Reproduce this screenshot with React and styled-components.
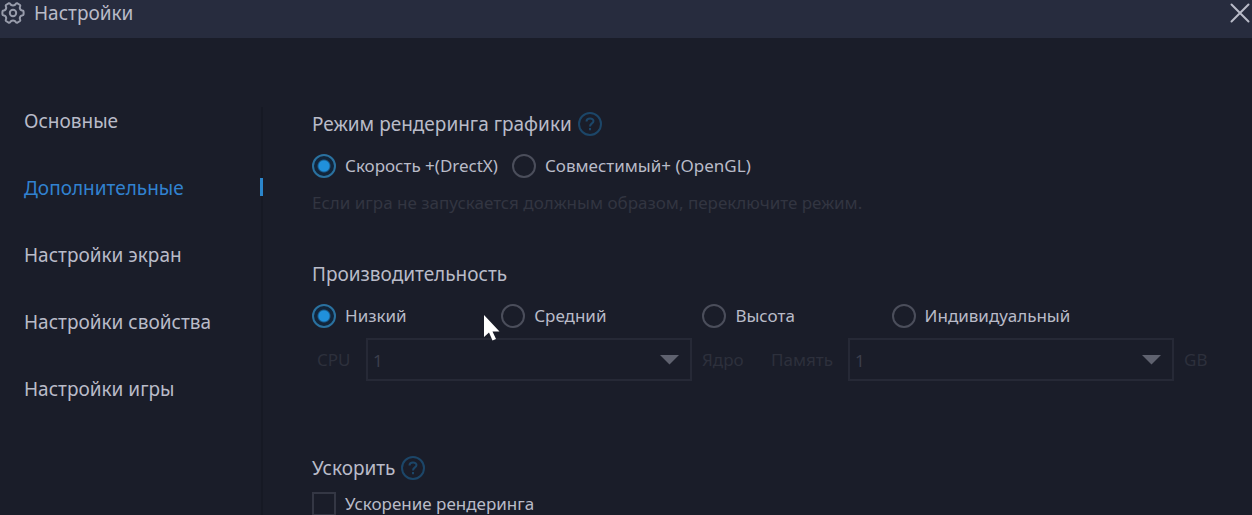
import React, { useState } from 'react';
import styled, { createGlobalStyle } from 'styled-components';

const GlobalStyle = createGlobalStyle`
  * {
    box-sizing: border-box;
  }

  body {
    margin: 0;
    background-color: #1a1d29;
    color: #b9bbc8;
    font-family: 'Noto Sans', 'Open Sans', sans-serif;
    font-size: 17px;
    overflow: hidden;
  }
`;

const Window = styled.div`
  display: flex;
  flex-direction: column;
  min-height: 100vh;
`;

const Header = styled.header`
  display: flex;
  align-items: center;
  gap: 9px;
  height: 38px;
  padding: 0 2px 12px 1px;
  background-color: #272c3e;
`;

const Title = styled.h1`
  flex: 1;
  margin: 0;
  font-size: 19px;
  line-height: 26px;
  font-weight: 400;
`;

const CloseButton = styled.button`
  display: flex;
  padding: 0;
  border: none;
  background: none;
  color: #b9bbc8;
  cursor: pointer;
`;

const Body = styled.div`
  display: flex;
  flex: 1;
  padding-top: 69px;
`;

const Sidebar = styled.nav`
  display: flex;
  flex-direction: column;
  gap: 39px;
  width: 263px;
  border-right: 2px solid #161924;
`;

const NavLink = styled.a`
  position: relative;
  padding-left: 24px;
  font-size: 19px;
  line-height: 28px;
  text-decoration: none;
  color: ${({ $active }) => ($active ? '#3182d0' : '#b9bbc8')};

  &::after {
    content: '';
    display: ${({ $active }) => ($active ? 'block' : 'none')};
    position: absolute;
    top: 4px;
    right: -2px;
    width: 3px;
    height: 18px;
    background-color: #2b86cc;
  }
`;

const Content = styled.main`
  flex: 1;
  padding: 3px 0 0 49px;
`;

const Section = styled.section`
  margin-bottom: ${({ $space }) => $space || 44}px;
`;

const Heading = styled.h2`
  display: flex;
  align-items: center;
  gap: 6px;
  margin: 0 0 ${({ $space }) => $space || 14}px;
  font-size: 19px;
  line-height: 28px;
  font-weight: 400;
`;

const HelpButton = styled.button`
  display: flex;
  padding: 0;
  border: none;
  background: none;
  color: #1c4668;
  cursor: pointer;
`;

const ModeRow = styled.div`
  display: flex;
  gap: 14px;
`;

const LevelRow = styled.div`
  display: grid;
  grid-template-columns: 189fr 201fr 189fr 360fr;
`;

const Option = styled.label`
  display: flex;
  align-items: center;
  gap: 9px;
  line-height: 28px;
  white-space: nowrap;
`;

const Radio = styled.input`
  appearance: none;
  width: 24px;
  height: 24px;
  margin: 0;
  border: 2px solid #4b4e5b;
  border-radius: 50%;

  &:checked {
    border-color: #2a719f;
    background: radial-gradient(circle, #2090dc 5px, #12253a 7px);
  }
`;

const Checkbox = styled.input`
  appearance: none;
  width: 24px;
  height: 24px;
  margin: 0;
  border: 2px solid #343744;

  &:checked {
    background-color: #2090dc;
  }
`;

const Hint = styled.p`
  margin: 10px 0 0;
  line-height: 26px;
  color: #323541;
`;

const Resources = styled.div`
  display: flex;
  align-items: center;
  margin-top: 8px;
  padding: 0 46px 0 5px;
  color: #2d303c;
`;

const FieldLabel = styled.label`
  width: ${({ $width }) => $width}px;
`;

const Unit = styled.span`
  width: ${({ $width }) => $width}px;
  padding-left: 10px;
`;

const SelectBox = styled.div`
  position: relative;
  flex: 1;

  svg {
    position: absolute;
    top: 17px;
    right: 13px;
    pointer-events: none;
  }
`;

const Select = styled.select`
  appearance: none;
  display: block;
  width: 100%;
  height: 43px;
  padding: 2px 5px 0;
  border: 2px solid #262936;
  border-radius: 0;
  background-color: #1a1d29;
  color: #3c3f4c;
  font: inherit;
  opacity: 1;
`;

const Pointer = styled.svg`
  position: absolute;
  left: 483px;
  top: 315px;
  pointer-events: none;
`;

const GearIcon = () => (
  <svg width="24" height="24" viewBox="0 0 24 24" fill="none" stroke="#989cab" strokeWidth="2" strokeLinejoin="round">
    <path d="M8 2.200 Q9 2 9.700 3.600 Q12 5.400 14.300 3.600 Q15 2 16 2.200 L19 4 Q19.800 4.800 18.800 6.300 Q18.600 9 21.200 9.600 Q22.600 9.700 22.600 10.700 V13.300 Q22.600 14.300 21.200 14.400 Q18.600 15 18.800 17.700 Q19.800 19.200 19 20 L16 21.800 Q15 22 14.300 20.400 Q12 18.600 9.700 20.400 Q9 22 8 21.800 L5 20 Q4.200 19.200 5.200 17.700 Q5.400 15 2.800 14.400 Q1.400 14.300 1.400 13.300 V10.700 Q1.400 9.700 2.800 9.600 Q5.400 9 5.200 6.300 Q4.200 4.800 5 4 Z" />
    <circle cx="12" cy="12" r="3.200" />
  </svg>
);

const CloseIcon = () => (
  <svg width="20" height="20" viewBox="0 0 20 20" stroke="currentColor" strokeWidth="2" strokeLinecap="round">
    <path d="M1.500 1.500 18.500 18.500M18.500 1.500 1.500 18.500" />
  </svg>
);

const ArrowIcon = () => (
  <svg width="19" height="10" viewBox="0 0 19 10" fill="#5f626f">
    <path d="M0 0h19L9.500 9.500z" />
  </svg>
);

const Help = () => (
  <HelpButton aria-label="Справка">
    <svg width="24" height="24" viewBox="0 0 24 24" fill="none" stroke="currentColor" strokeWidth="2">
      <circle cx="12" cy="12" r="11" />
      <path d="M8.500 9.500c0-4 7-4 7-.5 0 2.500-3.500 2.300-3.500 5.500M12 16v2.300" />
    </svg>
  </HelpButton>
);

const menu = ['Основные', 'Дополнительные', 'Настройки экран', 'Настройки свойства', 'Настройки игры'];
const modes = ['Скорость +(DrectX)', 'Совместимый+ (OpenGL)'];
const levels = ['Низкий', 'Средний', 'Высота', 'Индивидуальный'];

const App = () => {
  const [page, setPage] = useState(menu[1]);
  const [mode, setMode] = useState(modes[0]);
  const [level, setLevel] = useState(levels[0]);
  const locked = level !== levels[3];

  return (
    <Window>
      <GlobalStyle />
      <Header>
        <GearIcon />
        <Title>Настройки</Title>
        <CloseButton aria-label="Закрыть">
          <CloseIcon />
        </CloseButton>
      </Header>
      <Body>
        <Sidebar>
          {menu.map((item) => (
            <NavLink key={item} href="#" $active={item === page} onClick={() => setPage(item)}>
              {item}
            </NavLink>
          ))}
        </Sidebar>
        <Content>
          <Section>
            <Heading>
              Режим рендеринга графики <Help />
            </Heading>
            <ModeRow>
              {modes.map((item) => (
                <Option key={item}>
                  <Radio type="radio" name="mode" checked={item === mode} onChange={() => setMode(item)} />
                  {item}
                </Option>
              ))}
            </ModeRow>
            <Hint>Если игра не запускается должным образом, переключите режим.</Hint>
          </Section>
          <Section $space={73}>
            <Heading>Производительность</Heading>
            <LevelRow>
              {levels.map((item) => (
                <Option key={item}>
                  <Radio type="radio" name="level" checked={item === level} onChange={() => setLevel(item)} />
                  {item}
                </Option>
              ))}
            </LevelRow>
            <Resources>
              <FieldLabel htmlFor="cpu" $width={49}>CPU</FieldLabel>
              <SelectBox>
                <Select id="cpu" disabled={locked}>
                  <option>1</option>
                  <option>2</option>
                </Select>
                <ArrowIcon />
              </SelectBox>
              <Unit $width={79}>Ядро</Unit>
              <FieldLabel htmlFor="memory" $width={77}>Память</FieldLabel>
              <SelectBox>
                <Select id="memory" disabled={locked}>
                  <option>1</option>
                  <option>2</option>
                </Select>
                <ArrowIcon />
              </SelectBox>
              <Unit $width={32}>GB</Unit>
            </Resources>
          </Section>
          <section>
            <Heading $space={8}>
              Ускорить <Help />
            </Heading>
            <Option>
              <Checkbox type="checkbox" />
              Ускорение рендеринга
            </Option>
          </section>
        </Content>
      </Body>
      <Pointer width="17" height="27" viewBox="0 0 17 27" fill="#fff">
        <path d="M1 0v22l5-4.500 3.500 8 3.500-1.500-3.500-7.500H16.500z" />
      </Pointer>
    </Window>
  );
};

export default App;
